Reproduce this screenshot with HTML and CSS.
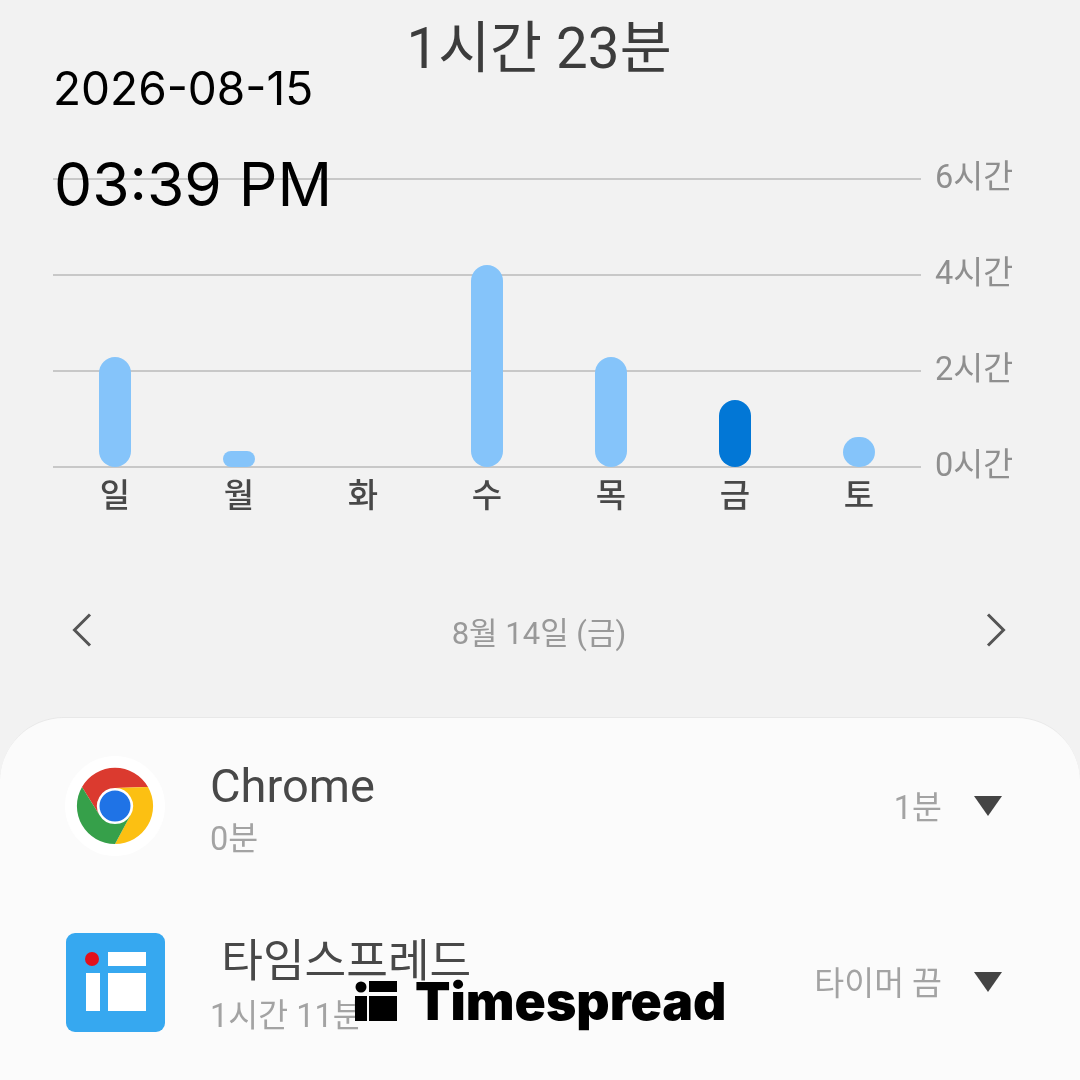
FILE: index.html
```html
<!DOCTYPE html>
<html lang="ko">
<head>
    <meta charset="UTF-8">
    <meta name="viewport" content="width=device-width, initial-scale=1.0">
    <title>디지털 웰빙</title>
    <link rel="stylesheet" href="styles.css">
</head>
<body>
    <h1 class="total">1시간 23분</h1>

    <div class="chart">
        <div class="grid">
            <div class="grid-row"><span class="grid-line"></span><span class="grid-label">6시간</span></div>
            <div class="grid-row"><span class="grid-line"></span><span class="grid-label">4시간</span></div>
            <div class="grid-row"><span class="grid-line"></span><span class="grid-label">2시간</span></div>
            <div class="grid-row"><span class="grid-line"></span><span class="grid-label">0시간</span></div>
        </div>
        <div class="bars">
            <div class="bar-col"><div class="bar" style="height: 110px"></div></div>
            <div class="bar-col"><div class="bar" style="height: 16px"></div></div>
            <div class="bar-col"></div>
            <div class="bar-col"><div class="bar" style="height: 202px"></div></div>
            <div class="bar-col"><div class="bar" style="height: 110px"></div></div>
            <div class="bar-col"><div class="bar bar-active" style="height: 67px"></div></div>
            <div class="bar-col"><div class="bar" style="height: 30px"></div></div>
        </div>
        <div class="days">
            <span>일</span><span>월</span><span>화</span><span>수</span><span>목</span><span>금</span><span>토</span>
        </div>
    </div>

    <div class="date-nav">
        <svg class="chevron" width="20" height="34" viewBox="0 0 20 34"><path d="M18 1.5 2.5 17 18 32.500"/></svg>
        <span class="date-label">8월 14일 (금)</span>
        <svg class="chevron" width="20" height="34" viewBox="0 0 20 34"><path d="M2 1.5 17.500 17 2 32.500"/></svg>
    </div>

    <div class="card">
        <div class="app-row">
            <div class="app-icon chrome-bg">
                <svg width="100" height="100" viewBox="-50 -50 100 100">
                    <path fill="#db3a2f" d="M-33-19A38 38 0 0 1 33-19L0-18A18 18 0 0 0-15.600 9Z"/>
                    <path fill="#fcc012" d="M33-19A38 38 0 0 1 0 38L15.600 9A18 18 0 0 0 0-18Z"/>
                    <path fill="#36a04a" d="M0 38A38 38 0 0 1-33-19L-15.600 9A18 18 0 0 0 15.600 9Z"/>
                    <circle r="15.500" fill="#1f73e6"/>
                </svg>
            </div>
            <div class="app-text">
                <div class="app-name">Chrome</div>
                <div class="app-time">0분</div>
            </div>
            <div class="app-limit">1분</div>
            <span class="arrow"></span>
        </div>
        <div class="app-row">
            <div class="app-icon">
                <svg width="100" height="100" viewBox="0 0 100 100">
                    <rect x="1" y="1" width="99" height="99" rx="9" fill="#36a8f0"/>
                    <circle cx="27" cy="27" r="7" fill="#e2101c"/>
                    <rect x="43" y="20" width="38" height="14" fill="#fff"/>
                    <rect x="43" y="41" width="38" height="38" fill="#fff"/>
                    <rect x="21" y="41" width="14" height="38" fill="#fff"/>
                </svg>
            </div>
            <div class="app-text">
                <div class="app-name app-name-ko">&nbsp;타임스프레드</div>
                <div class="app-time">1시간 11분</div>
            </div>
            <div class="app-limit">타이머 끔</div>
            <span class="arrow"></span>
        </div>
    </div>

    <!-- 워터마크: 스크린샷 위에 찍힌 날짜와 로고 -->
    <div class="stamp">
        <div class="stamp-date">2026-08-15</div>
        <div class="stamp-time">03:39 PM</div>
    </div>
    <div class="brand">
        <svg width="42" height="40" viewBox="0 0 42 40">
            <circle cx="6" cy="6" r="5.500"/>
            <rect x="14" y="0" width="28" height="11"/>
            <rect x="0" y="15" width="12" height="25"/>
            <rect x="14" y="15" width="28" height="25"/>
        </svg>
        <span class="brand-name">Timespread</span>
    </div>
</body>
</html>
```

FILE: styles.css
```css
body {
    font-family: Roboto, "Noto Sans CJK KR", sans-serif;
    margin: 0;
    padding: 0;
    width: 1080px;
    height: 1080px;
    overflow: hidden;
    position: relative;
    background-color: #f2f2f2;
}

/* the phone capture underneath is a bit soft, the stamp on top is not */
.total, .chart, .date-nav, .card {
    filter: blur(0.6px);
}

.total {
    margin: 0;
    padding: 2px 2px 0 0;
    height: 92px;
    line-height: 94px;
    text-align: center;
    font-size: 56.5px;
    font-weight: 400;
    color: #3c3c3c;
}

.chart {
    position: relative;
    margin-top: 73px;
}

.grid {
    display: flex;
    flex-direction: column;
    gap: 72px;
    padding-left: 53px;
}

.grid-row {
    display: flex;
    align-items: center;
    height: 24px;
}

.grid-line {
    width: 868px;
    height: 2px;
    background-color: #c8c8c8;
}

.grid-label {
    margin-left: 14px;
    margin-bottom: 4px;
    line-height: 24px;
    font-size: 32.5px;
    color: #8f8f8f;
}

.bars {
    position: absolute;
    top: 0;
    left: 53px;
    width: 868px;
    height: 300px;
    display: flex;
}

.bar-col {
    flex: 1;
    display: flex;
    align-items: flex-end;
    justify-content: center;
}

.bar {
    width: 32px;
    border-radius: 16px;
    background-color: #85c4fa;
}

.bar-active {
    background-color: #0277d6;
}

.days {
    display: flex;
    width: 868px;
    margin-left: 53px;
    height: 32px;
    line-height: 33px;
    font-size: 33px;
    font-weight: 500;
    color: #484848;
}

.days span {
    flex: 1;
    text-align: center;
}

.date-nav {
    display: flex;
    align-items: center;
    justify-content: space-between;
    height: 60px;
    margin-top: 89px;
    padding: 0 74px 0 72px;
}

.chevron {
    fill: none;
    stroke: #555;
    stroke-width: 3;
}

.date-label {
    font-size: 31px;
    color: #999;
}

.card {
    margin-top: 57px;
    height: 400px;
    background-color: #fbfbfb;
    border-top: 1px solid #e8e8e8;
    border-radius: 64px 64px 0 0;
}

.app-row {
    display: flex;
    align-items: center;
    height: 176px;
    padding: 0 78px 0 65px;
}

.app-icon {
    width: 100px;
    height: 100px;
}

.chrome-bg {
    background-color: #fff;
    border-radius: 50%;
}

.app-text {
    flex: 1;
    margin-left: 45px;
    margin-top: 10px;
}

.app-name {
    font-size: 47px;
    line-height: 56px;
    color: #484848;
}

.app-name-ko {
    font-size: 45.3px;
    line-height: 58px;
}

.app-time {
    font-size: 32.5px;
    line-height: 50px;
    color: #a3a3a3;
}

.app-limit {
    font-size: 32.5px;
    color: #a3a3a3;
    margin-right: 32px;
    margin-bottom: 4px;
}

.arrow {
    width: 0;
    height: 0;
    border-left: 14px solid transparent;
    border-right: 14px solid transparent;
    border-top: 20px solid #444;
}

.stamp {
    position: absolute;
    top: 59px;
    left: 54px;
    font-family: Inter, sans-serif;
    color: #000;
    will-change: transform;
}

.stamp-date {
    font-size: 46px;
    line-height: 58px;
    margin-left: -1px;
}

.stamp-time {
    font-size: 60.5px;
    line-height: 76px;
    margin-top: 29px;
}

.brand {
    position: absolute;
    top: 974px;
    left: 355px;
    display: flex;
    align-items: center;
    gap: 18px;
}

.brand-name {
    font-family: Inter, sans-serif;
    font-size: 51.7px;
    font-weight: 900;
    line-height: 54px;
    color: #000;
}
```
